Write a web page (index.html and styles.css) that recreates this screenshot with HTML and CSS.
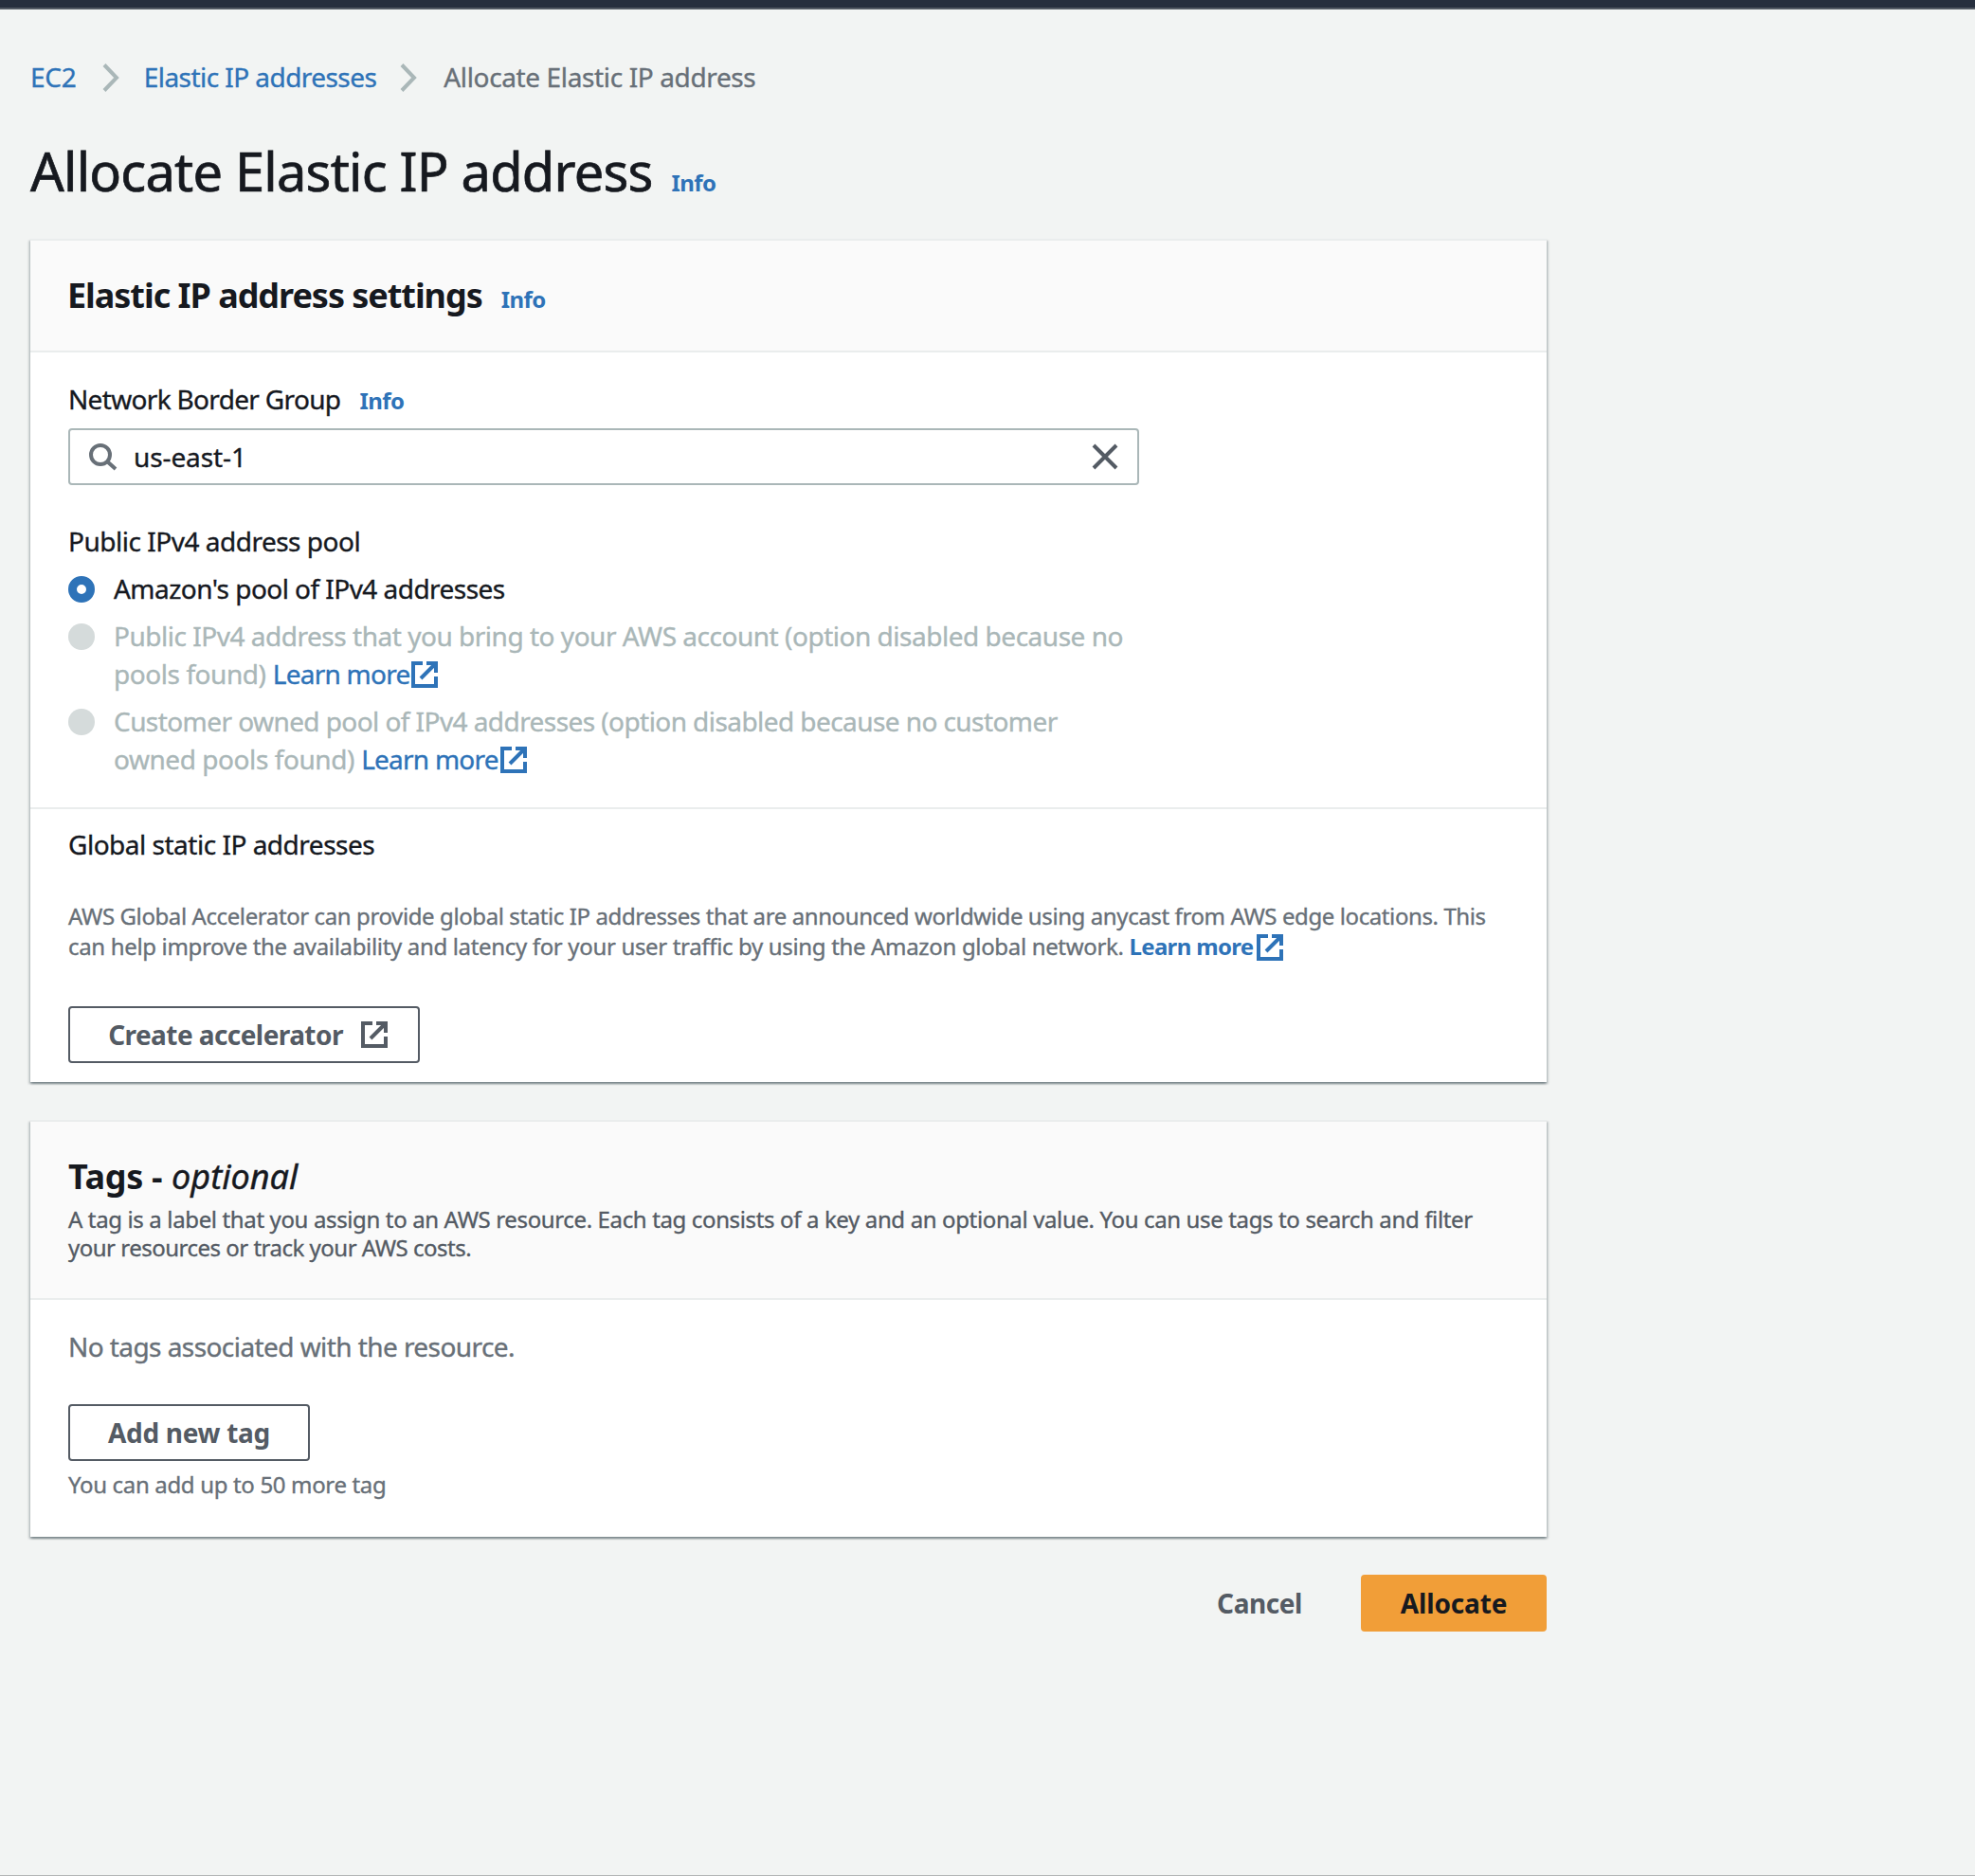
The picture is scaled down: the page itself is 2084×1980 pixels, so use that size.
FILE: index.html
```html
<!DOCTYPE html>
<html lang="en">
<head>
<meta charset="utf-8">
<title>Allocate Elastic IP address</title>
<link rel="stylesheet" href="styles.css">
</head>
<body>
<svg class="defs" width="0" height="0" aria-hidden="true">
  <symbol id="external" viewBox="0 0 28 28">
    <path d="M12 2H2V26H26V16M16 2H26V12M25 3L10 18" fill="none" stroke="currentColor" stroke-width="4"/>
  </symbol>
  <symbol id="chevron" viewBox="0 0 18 30">
    <path d="M2 1.5L15 15L2 28.5" fill="none" stroke="currentColor" stroke-width="4"/>
  </symbol>
</svg>
<div class="topbar"></div>
<main class="page">
  <nav class="breadcrumb">
    <a class="crumb-service">EC2</a>
    <svg class="chevron"><use href="#chevron"/></svg>
    <a class="crumb-link">Elastic IP addresses</a>
    <svg class="chevron"><use href="#chevron"/></svg>
    <span class="crumb-current">Allocate Elastic IP address</span>
  </nav>

  <div class="title-row">
    <h1>Allocate Elastic IP address</h1>
    <a class="info">Info</a>
  </div>

  <section class="card">
    <header class="card-header">
      <div class="heading-row">
        <h2 class="settings-title">Elastic IP address settings</h2>
        <a class="info">Info</a>
      </div>
    </header>
    <div class="card-body">
      <div class="label-row">
        <label class="border-label">Network Border Group</label>
        <a class="info">Info</a>
      </div>
      <div class="search">
        <svg class="search-icon" viewBox="0 0 30 28"><circle cx="12" cy="12" r="10"/><path d="M18.5 18.5L28 27"/></svg>
        <span class="search-value">us-east-1</span>
        <svg class="clear-icon" viewBox="0 0 28 28"><path d="M2 2L26 26M26 2L2 26"/></svg>
      </div>
      <div class="label pool-label">Public IPv4 address pool</div>
      <div class="radios">
        <div class="option">
          <span class="radio radio-on"></span>
          <div class="amazon">Amazon's pool of IPv4 addresses</div>
        </div>
        <div class="option disabled">
          <span class="radio"></span>
          <div><span class="byoip">Public IPv4 address that you bring to your AWS account (option disabled because no</span><br><span class="found">pools found)</span> <a class="learn">Learn more<svg class="ext"><use href="#external"/></svg></a></div>
        </div>
        <div class="option disabled">
          <span class="radio"></span>
          <div><span class="customer">Customer owned pool of IPv4 addresses (option disabled because no customer</span><br><span class="found">owned pools found)</span> <a class="learn">Learn more<svg class="ext"><use href="#external"/></svg></a></div>
        </div>
      </div>
    </div>
    <div class="card-section">
      <div class="label">Global static IP addresses</div>
      <p class="accelerator-text"><span class="line-one">AWS Global Accelerator can provide global static IP addresses that are announced worldwide using anycast from AWS edge locations. This</span><br>can help improve the availability and latency for your user traffic by using the Amazon global network. <a class="learn-bold">Learn more<svg class="ext"><use href="#external"/></svg></a></p>
      <button class="button create"><span>Create accelerator</span><svg class="button-icon"><use href="#external"/></svg></button>
    </div>
  </section>

  <section class="card tags">
    <header class="card-header tags-header">
      <h2 class="tags-title">Tags - <i>optional</i></h2>
      <p class="tags-text">A tag is a label that you assign to an AWS resource. Each tag consists of a key and an optional value. You can use tags to search and filter<br><span class="costs">your resources or track your AWS costs.</span></p>
    </header>
    <div class="tags-body">
      <div class="empty">No tags associated with the resource.</div>
      <button class="button add">Add new tag</button>
      <div class="limit">You can add up to 50 more tag</div>
    </div>
  </section>

  <footer class="actions">
    <button class="button cancel">Cancel</button>
    <button class="button allocate">Allocate</button>
  </footer>
</main>
</body>
</html>
```
FILE: styles.css
```css
* { box-sizing: border-box; }
body {
  margin: 0;
  height: 1980px;
  display: flex;
  flex-direction: column;
  background: #f2f4f3;
  border-bottom: 1px solid #b3b5b5;
  color: #16191f;
  font: 28px/40px "Noto Sans", "Open Sans", sans-serif;
  -webkit-text-stroke: 0.35px currentColor;
  white-space: nowrap;
  overflow: hidden;
}
h1, h2, p { margin: 0; }
svg { display: block; flex: none; }
.defs { position: absolute; }
.topbar { height: 10px; background: #262f3e; border-bottom: 2px solid #535b65; flex: none; }
.page { width: 1600px; margin: 51px 0 0 32px; }

.breadcrumb { display: flex; align-items: center; height: 40px; color: #687078; }
.breadcrumb a { color: #2e73b8; }
.chevron { width: 18px; height: 30px; color: #aab7b8; margin: 2px 25px 0; }
.crumb-service { margin: 0 2px 0 0; letter-spacing: -0.2px; }
.crumb-link { margin-left: 1px; letter-spacing: -0.55px; }
.crumb-current { margin-left: 3px; letter-spacing: -0.37px; }

.title-row { display: flex; align-items: baseline; gap: 20px; margin-top: 47px; height: 64px; }
h1 { font-size: 56px; line-height: 64px; font-weight: 400; letter-spacing: -0.8px; -webkit-text-stroke-width: 0.7px; }
.info { color: #2e73b8; font-size: 24px; line-height: 32px; font-weight: 700; letter-spacing: -0.56px; -webkit-text-stroke-width: 0; }

.card {
  margin-top: 40px;
  background: #fff;
  border-top: 2px solid #eaeded;
  box-shadow: 0 2px 2px rgba(0,28,36,.3), 2px 2px 2px rgba(0,28,36,.15), -2px 2px 2px rgba(0,28,36,.15);
}
.card-header { height: 118px; padding: 36px 40px 0; background: #fafafa; border-bottom: 2px solid #eaeded; }
.heading-row { display: flex; align-items: baseline; gap: 20px; height: 44px; }
h2 { font-size: 36px; line-height: 44px; font-weight: 700; -webkit-text-stroke-width: 0; }
.settings-title { letter-spacing: -1.04px; margin-left: -1px; }
.card-body { padding: 29px 40px 31px; }
.label-row { display: flex; align-items: baseline; gap: 20px; height: 40px; }
.border-label { letter-spacing: -0.67px; }
.search {
  display: flex;
  align-items: center;
  width: 1130px;
  height: 60px;
  margin-top: 11px;
  padding: 0 20px;
  border: 2px solid #aab7b8;
  border-radius: 4px;
}
.search-icon { width: 30px; height: 28px; fill: none; stroke: #687078; stroke-width: 4; overflow: visible; }
.search-value { flex: 1; margin-left: 17px; letter-spacing: -0.1px; }
.clear-icon { width: 28px; height: 28px; fill: none; stroke: #545b64; stroke-width: 4; }
.label { letter-spacing: -0.49px; }
.pool-label { margin-top: 39px; }
.radios { display: flex; flex-direction: column; gap: 10px; margin-top: 10px; }
.option { display: flex; gap: 20px; }
.radio { flex: none; width: 28px; height: 28px; margin-top: 7px; border-radius: 50%; background: #d5dbdb; }
.radio-on { background: #fff; border: 9px solid #2e73b8; }
.amazon { letter-spacing: -0.54px; }
.disabled { color: #aab7b8; }
.byoip { letter-spacing: -0.48px; }
.customer { letter-spacing: -0.57px; }
.found { letter-spacing: -0.44px; }
.learn { color: #2e73b8; letter-spacing: -0.76px; }
.ext { display: inline-block; width: 28px; height: 28px; margin-left: 2px; vertical-align: -4px; }

.card-section { padding: 17px 40px 20px; border-top: 2px solid #eaeded; }
.accelerator-text { margin-top: 40px; font-size: 24px; line-height: 32px; color: #687078; letter-spacing: -0.335px; }
.line-one { letter-spacing: -0.4px; }
.learn-bold { color: #2e73b8; font-weight: 700; letter-spacing: -0.66px; -webkit-text-stroke-width: 0; }
.learn-bold .ext { vertical-align: -6px; margin-left: 3px; }

.button {
  display: flex;
  align-items: center;
  justify-content: center;
  height: 60px;
  padding: 0;
  border: 2px solid #545b64;
  border-radius: 4px;
  background: #fff;
  color: #545b64;
  font: 700 28px/40px "Noto Sans", "Open Sans", sans-serif;
  -webkit-text-stroke-width: 0;
}
.create { width: 371px; margin-top: 47px; padding-left: 8px; gap: 19px; letter-spacing: -0.57px; }
.button-icon { width: 28px; height: 28px; }

.tags-header { height: 188px; }
.tags-title { letter-spacing: -0.35px; }
.tags-title i { font-weight: 400; letter-spacing: 0; margin-left: 1px; -webkit-text-stroke-width: 0.4px; }
.tags-text { margin-top: 8px; font-size: 24px; line-height: 30px; color: #545b64; letter-spacing: -0.365px; }
.costs { letter-spacing: -0.5px; }
.tags-body { padding: 29px 40px 39px; color: #687078; }
.empty { letter-spacing: -0.57px; }
.add { width: 255px; margin-top: 41px; letter-spacing: -0.3px; }
.limit { margin-top: 9px; font-size: 24px; line-height: 32px; letter-spacing: -0.34px; }

.actions { display: flex; justify-content: flex-end; gap: 20px; margin-top: 40px; }
.cancel { width: 174px; border-color: transparent; background: transparent; letter-spacing: -0.45px; }
.allocate { width: 196px; border-color: #f19e38; background: #f19e38; color: #16191f; letter-spacing: -0.15px; }
```
